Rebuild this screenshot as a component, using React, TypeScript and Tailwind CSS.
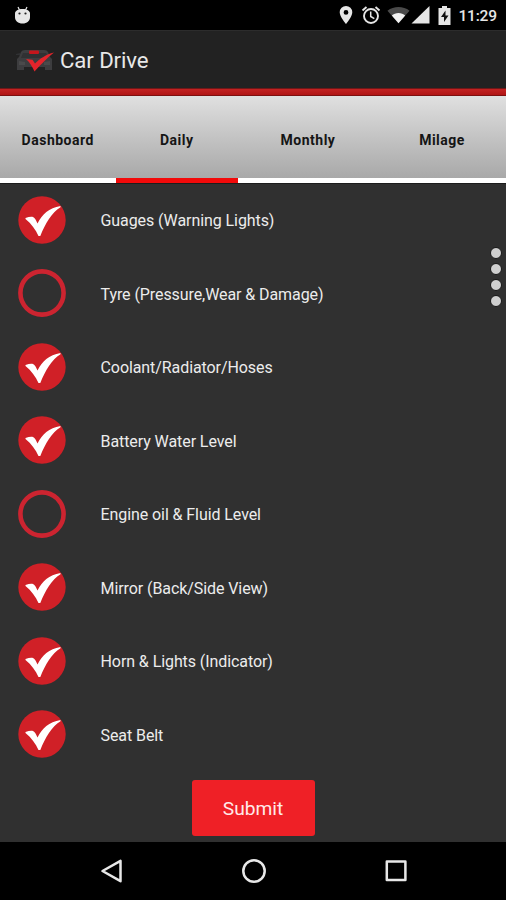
import React from 'react';

const TABS = [
  { label: 'Dashboard', width: 'w-[115.500px]' },
  { label: 'Daily', width: 'w-[122.500px]', active: true },
  { label: 'Monthly', width: 'w-[140px]' },
  { label: 'Milage', width: 'w-[128px]' },
];

const CHECKS = [
  { label: 'Guages (Warning Lights)', done: true },
  { label: 'Tyre (Pressure,Wear & Damage)', done: false },
  { label: 'Coolant/Radiator/Hoses', done: true },
  { label: 'Battery Water Level', done: true },
  { label: 'Engine oil & Fluid Level', done: false },
  { label: 'Mirror (Back/Side View)', done: true },
  { label: 'Horn & Lights (Indicator)', done: true },
  { label: 'Seat Belt', done: true },
];

const StatusBar: React.FC = () => (
  <div className="flex h-[30px] shrink-0 items-center bg-black pl-[14px] pr-[9px] text-[#e6e6e6]">
    <svg width="17" height="20" viewBox="0 0 17 20" fill="currentColor">
      <path d="M4 2l1.500 3M13 2l-1.500 3" stroke="currentColor" strokeWidth="1.200" />
      <path d="M1 8.500C1 6 4 4 8.500 4S16 6 16 8.500V12c0 4-3 6.500-7.500 6.500S1 16 1 12z" />
      <circle cx="5.500" cy="8.500" r="1.100" fill="#222" />
      <circle cx="11.500" cy="8.500" r="1.100" fill="#222" />
    </svg>
    <svg className="ml-auto" width="14" height="20" viewBox="0 0 14 20" fill="currentColor">
      <path fillRule="evenodd" d="M7 1a6.300 6.300 0 0 0-6.300 6.300C.7 12 7 19 7 19s6.300-7 6.300-11.700A6.300 6.300 0 0 0 7 1zm0 4a2.400 2.400 0 1 1 0 4.800A2.400 2.400 0 0 1 7 5z" />
    </svg>
    <svg className="ml-[8px]" width="20" height="20" viewBox="0 0 20 20" fill="none" stroke="currentColor" strokeWidth="1.900">
      <circle cx="10" cy="11" r="7" />
      <path d="M1.500 5.500l4-3.500M18.500 5.500l-4-3.500" />
      <path d="M9.700 6.500v5l3.600 2.200" strokeWidth="1.500" />
    </svg>
    <svg className="ml-[6px]" width="23" height="18" viewBox="0 0 24 18">
      <path d="M0.500 4.500C7-.5 17-.5 23.500 4.500L12 17.500z" fill="#4a4a4a" />
      <path d="M5 9.500c3.500-3.500 10.500-3.500 14 0L12 17.500z" fill="#f2f2f2" />
    </svg>
    <svg className="ml-px" width="19" height="18" viewBox="0 0 19 18" fill="currentColor">
      <path d="M18.500 0v17.500H.5z" />
    </svg>
    <svg className="ml-[8px]" width="13" height="19" viewBox="0 0 13 19">
      <path d="M4 0h5v2h3.500v17H.5V2H4z" fill="#e6e6e6" />
      <path d="M7.500 4.500L3 11h3v5l4.500-6.500h-3z" fill="#111" />
    </svg>
    <span className="ml-[8px] mt-[3px] w-[38.500px] whitespace-nowrap text-[15.500px] font-medium leading-none tracking-[-0.200px]">11:29</span>
  </div>
);

const AppBar: React.FC = () => (
  <header className="flex h-[58px] shrink-0 items-center border-t border-[#2c2c2c] bg-[#222222] pl-[16px]">
    <svg className="mt-[2px]" width="39" height="24" viewBox="0 0 39 24">
      <path d="M5 3Q6 1 9 1h19q3 0 4 2l2 5 2 2v11h-7v-3H8v3H1V10l2-2z" fill="#3d3d3f" />
      <path d="M0 5l4-1v2H0zM7 4h23l2 5H5z" fill="#303133" />
      <path d="M3 12l6 1v3H3zM34 12l-6 1v3h6z" fill="#4a4a4b" />
      <rect x="13" y="1.500" width="10" height="3.500" rx="1" fill="#c5161c" />
      <path d="M10 10l6.500.8 2.500 3.700C24 9.500 30 5.500 38 3.500 31 9 25 15.500 18.500 22.500 16.500 18 14 13.500 10 10z" fill="#e3242b" />
    </svg>
    <h1 className="ml-[5px] mt-[2px] text-[22.200px] leading-none tracking-[-0.100px] text-[#e8e8e8]">Car Drive</h1>
  </header>
);

const TabBar: React.FC = () => (
  <nav className="flex h-[87px] shrink-0 bg-linear-to-b from-[#e0e0e0] to-[#a5a5a5]">
    {TABS.map((tab) => (
      <button
        key={tab.label}
        className={`${tab.width} shrink-0 border-b-[5px] pt-[6px] text-center text-[14px] font-bold tracking-[0.500px] text-[#151515] ${
          tab.active ? 'border-[#f20a0a]' : 'border-white'
        }`}
      >
        {tab.label}
      </button>
    ))}
  </nav>
);

const CheckMark: React.FC<{ done: boolean }> = ({ done }) => (
  <svg width="48" height="48" viewBox="0 0 48 48" className="shrink-0">
    {done ? (
      <>
        <circle cx="24" cy="24" r="23.700" fill="#d02027" />
        <path d="M7.500 22c3-1 5.500-1.400 7.500-1 2 1.200 3.300 3.500 4.500 6.500C24 18.500 31 11.800 42.500 10v1.200C33.500 17 27.500 27 22.300 40h-1.800C17.500 33.500 13.500 28 7.500 23z" fill="#fff" />
      </>
    ) : (
      <circle cx="24" cy="24" r="21.600" fill="none" stroke="#cc2430" strokeWidth="4.600" />
    )}
  </svg>
);

const NavBar: React.FC = () => (
  <footer className="flex h-[58px] shrink-0 items-center bg-black pl-[100px] pr-[98px]">
    <svg width="24" height="24" viewBox="0 0 24 24" fill="none" stroke="#e8e8e8" strokeWidth="2.500" strokeLinejoin="round">
      <path d="M20.500 1.800v20.400L2.500 12z" />
    </svg>
    <svg className="mx-auto" width="26" height="26" viewBox="0 0 26 26" fill="none" stroke="#e8e8e8" strokeWidth="2.500">
      <circle cx="13" cy="13" r="10.700" />
    </svg>
    <svg width="24" height="24" viewBox="0 0 24 24" fill="none" stroke="#e8e8e8" strokeWidth="2.500" strokeLinejoin="round">
      <path d="M2.800 2.500h18.600v18.600H2.800z" />
    </svg>
  </footer>
);

const App: React.FC = () => {
  return (
    <div className="relative flex h-[900px] w-[506px] flex-col overflow-hidden bg-[#303030] font-[Roboto,sans-serif]">
      <StatusBar />
      <AppBar />
      <div className="h-[8px] shrink-0 border-b border-[#7d1010] border-t border-t-[#701818] bg-linear-to-b from-[#c32222] to-[#b01414]" />
      <TabBar />

      <main className="flex flex-1 flex-col border-t border-[#1c1c1c]">
        <ul className="-mt-px">
          {CHECKS.map((item) => (
            <li key={item.label} className="flex h-[73.500px] items-center pl-[18px]">
              <CheckMark done={item.done} />
              <span className="ml-[34.500px] mt-[2.500px] whitespace-nowrap text-[16px] tracking-[-0.080px] text-[#ececec]">{item.label}</span>
            </li>
          ))}
        </ul>
        <button className="mx-auto mt-[9px] h-[56px] w-[123px] rounded-[3px] bg-[#ef2026] pt-[3px] text-[19.200px] text-[#ffe9e9]">
          Submit
        </button>
      </main>

      {/* overflow handle */}
      <div className="absolute right-[4px] top-[247px] flex flex-col gap-[4px]">
        {[0, 1, 2, 3].map((dot) => (
          <span key={dot} className="size-[12px] rounded-full border border-[#161616] bg-[#cfcfcf]" />
        ))}
      </div>

      <NavBar />
    </div>
  );
};

export default App;
